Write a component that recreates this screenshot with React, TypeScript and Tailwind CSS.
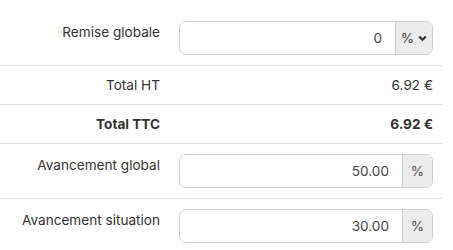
import React from "react";

function InputRow({ label, value, addon, select }: { label: string; value: string; addon: string; select?: boolean }) {
  return (
    <div className="flex items-start border-b border-[#dedede] pt-[10px] pb-[10px]">
      <div className="w-[160px] shrink-0 text-right leading-[20px] mt-[1px] text-[#333]">{label}</div>
      <div className="ml-[19px] flex h-[34px] w-[254px] rounded-[7px] border border-[#cfcfcf]">
        <div className="flex-1 flex items-center justify-end pr-[13px] text-[#444]">{value}</div>
        <div
          className={
            select
              ? "flex w-[37px] items-center justify-center gap-[4px] rounded-r-[7px] border-l border-[#cfcfcf] bg-[#ececec] text-[#444]"
              : "flex w-[30px] items-center justify-center rounded-r-[7px] border-l border-[#cfcfcf] bg-[#ececec] text-[#555]"
          }
        >
          <span>{addon}</span>
          {select && (
            <svg width="9" height="7" viewBox="0 0 9 7" className="mt-[1px]">
              <path d="M1.2 1.5 L4.5 4.8 L7.8 1.5" fill="none" stroke="#333" strokeWidth="2.2" />
            </svg>
          )}
        </div>
      </div>
    </div>
  );
}

function TotalRow({ label, value, bold }: { label: string; value: string; bold?: boolean }) {
  return (
    <div className={"flex items-center border-b border-[#dedede] h-[39px] text-[#333] " + (bold ? "font-bold" : "")}>
      <div className="w-[160px] shrink-0 text-right">{label}</div>
      <div className="flex-1 text-right pr-[10px]">{value}</div>
    </div>
  );
}

export default function App() {
  return (
    <div className="w-[453px] h-[250px] bg-white overflow-hidden text-[13.6px]" style={{ fontFamily: "Inter, 'Liberation Sans', sans-serif" }}>
      <div className="w-[443px] pt-[11px]">
        <InputRow label="Remise globale" value="0" addon="%" select />
        <TotalRow label="Total HT" value="6.92 €" />
        <TotalRow label="Total TTC" value="6.92 €" bold />
        <InputRow label="Avancement global" value="50.00" addon="%" />
        <InputRow label="Avancement situation" value="30.00" addon="%" />
      </div>
    </div>
  );
}
